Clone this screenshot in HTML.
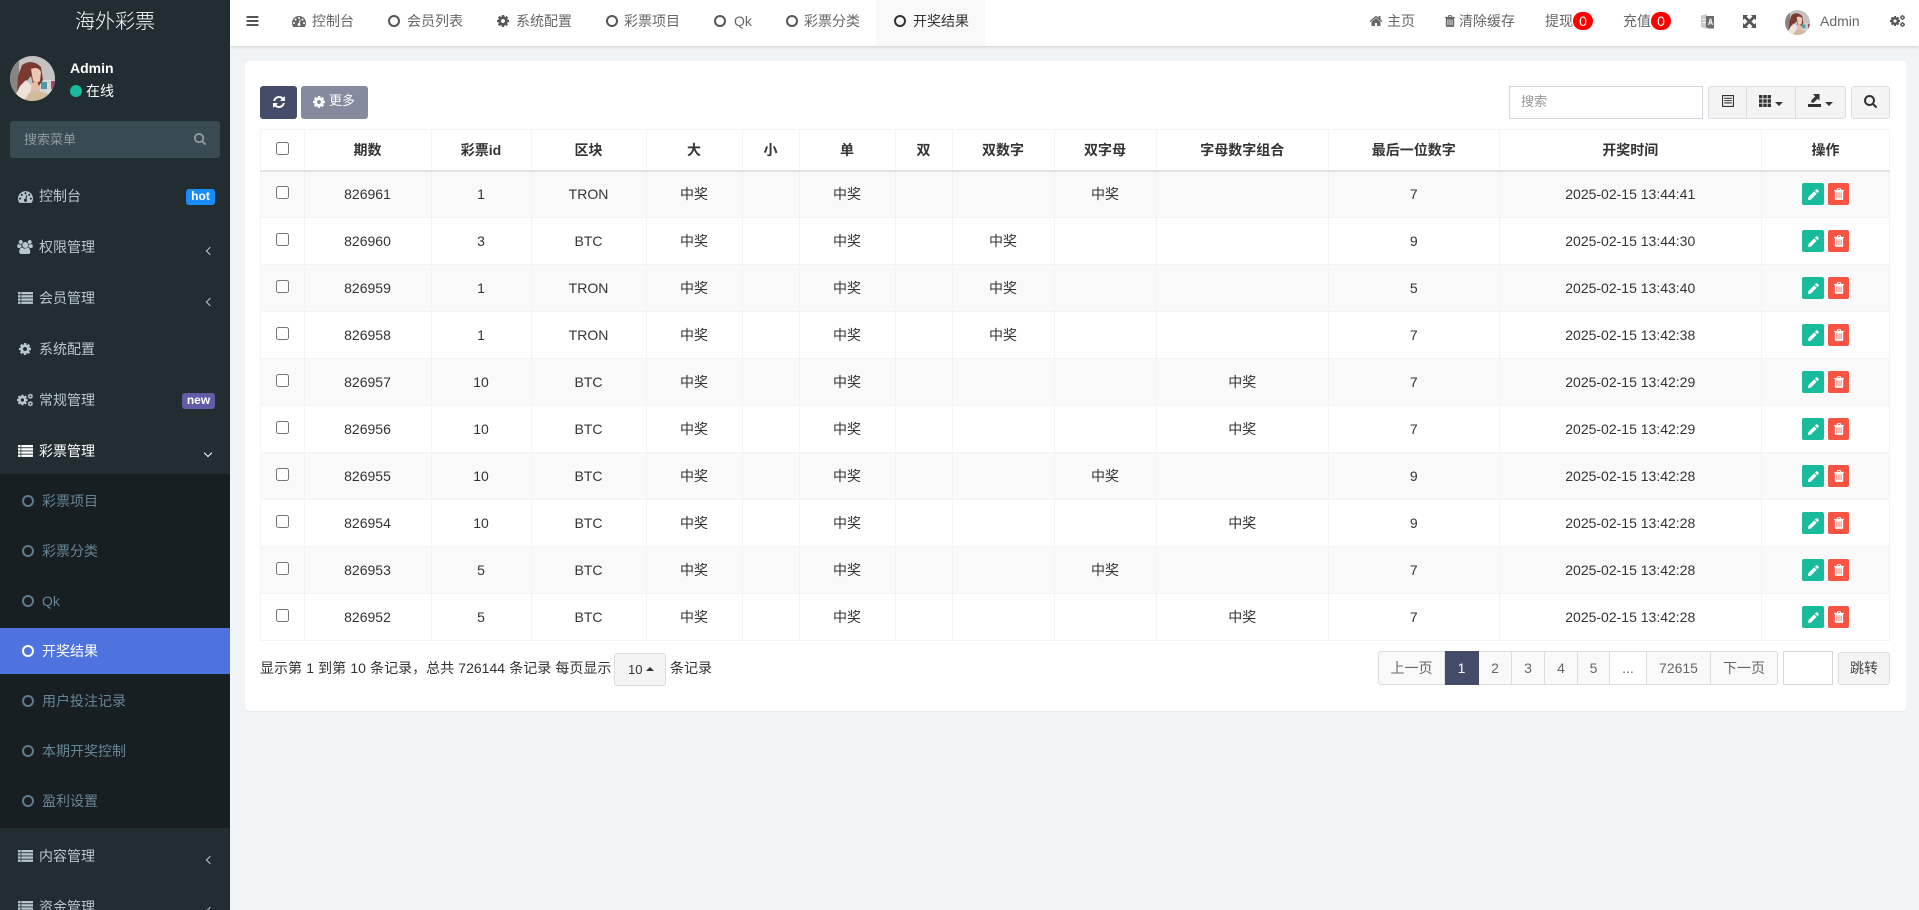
<!DOCTYPE html>
<html lang="zh-CN"><head><meta charset="utf-8"><title>开奖结果</title>
<style>
*{box-sizing:border-box}
html,body{margin:0;padding:0;width:1919px;height:910px;overflow:hidden;background:#f1f4f6;font-family:"Liberation Sans","Noto Sans CJK SC",sans-serif;font-size:14px;color:#333}
.a{position:absolute;white-space:nowrap}
svg.i{position:absolute;fill:currentColor;display:block}
#side{position:absolute;left:0;top:0;width:230px;height:910px;background:#222d32;overflow:hidden}
.m{position:absolute;left:39px;line-height:20px;color:#b8c7ce;white-space:nowrap}
.s{position:absolute;left:42px;line-height:20px;color:#668596;white-space:nowrap}
.r{position:absolute;left:22px;width:12px;height:12px;border:2.5px solid #5c7c8e;border-radius:50%}
.mi{color:#b8c7ce}
.ch{position:absolute;left:206.500px;width:6px;height:6px;border-left:1.5px solid #b8c7ce;border-bottom:1.5px solid #b8c7ce;transform:rotate(45deg)}
#top{position:absolute;left:230px;top:0;width:1689px;height:46px;background:#fff;box-shadow:0 1px 3px rgba(0,0,0,.15)}
.t{position:absolute;top:11px;line-height:20px;color:#666;white-space:nowrap}
.c{position:absolute;top:15px;width:12px;height:12px;border:2.3px solid #555;border-radius:50%}
.bd{position:absolute;top:12px;width:20px;height:18px;background:#f00;color:#fff;border-radius:10px;text-align:center;line-height:18px}
#panel{position:absolute;left:245px;top:61px;width:1661px;height:650px;background:#fff;border-radius:4px;box-shadow:0 1px 1px rgba(0,0,0,.05)}
.b{position:absolute;top:86px;height:33px;border-radius:3px}
table{position:absolute;left:260px;top:129px;width:1630px;table-layout:fixed;border-collapse:collapse}
th,td{border:1px solid #f4f4f4;padding:0;text-align:center;vertical-align:middle;font-size:14px;line-height:20px;overflow:hidden}
th{height:41px;border-bottom:2px solid #e2e3e4;font-weight:bold;color:#333}
td{height:47px;color:#333}
tbody tr:nth-child(odd) td{background:#f9f9f9}
input[type=checkbox]{margin:0;width:13px;height:13px;vertical-align:middle;position:relative;top:-3px;display:inline-block}
.ed,.de{display:inline-block;height:22px;border-radius:2px;vertical-align:middle;position:relative}
.ed{background:#18bc9c;margin-right:4px;width:22px}
.de{background:#f75444;width:21px}
.ed svg{position:absolute;left:5.500px;top:5.500px;width:11px;height:11px;fill:#fff}
.de svg{position:absolute;left:5.500px;top:5px;width:10px;height:12px;fill:#fff}
.pg{position:absolute;top:651px;height:34px;border:1px solid #ddd;border-left:0;background:#f9f9f9;color:#666;text-align:center;line-height:32px}
</style></head><body>
<svg width="0" height="0" style="position:absolute"><defs>
<clipPath id="cv"><circle cx="22.500" cy="22.500" r="22.500"/></clipPath>
<symbol id="ava" viewBox="0 0 45 45"><g clip-path="url(#cv)"><rect width="45" height="45" fill="#c4c2c3"/><rect x="0" width="9" height="45" fill="#8a8582"/><rect x="30" y="24" width="15" height="21" fill="#d9d7d5"/><rect x="31" y="26" width="6" height="7" fill="#4f98a8"/><rect x="41" y="25" width="4" height="8" fill="#a04a5e"/><path d="M12 9Q22 2 31 11L33 24 28 31 23 28 21 20 15 27 14 33 7 35 8 20Z" fill="#7b3a30"/><path d="M21 13Q28 10 31 16L30 25 27 27 23 25Z" fill="#edc9b5"/><path d="M6 38 10 30 16 24 22 30 20 38 13 45H4Z" fill="#efe2db"/><path d="M22 27 27 25 30 33 24 36 21 33Z" fill="#e6bca7"/><path d="M14 45 19 37 28 35 38 38 42 45Z" fill="#d2bb98"/></g></symbol>
<symbol id="bars" viewBox="0 256 1536 1280"><path d="M1536 1344v128q0 26-19 45t-45 19H64q-26 0-45-19t-19-45v-128q0-26 19-45t45-19h1408q26 0 45 19t19 45zm0-512v128q0 26-19 45t-45 19H64q-26 0-45-19T0 960V832q0-26 19-45t45-19h1408q26 0 45 19t19 45zm0-512v128q0 26-19 45t-45 19H64q-26 0-45-19T0 448V320q0-26 19-45t45-19h1408q26 0 45 19t19 45z"/></symbol>
<symbol id="search" viewBox="64 128 1664 1664"><path d="M1216 832q0-185-131.500-316.500T768 384 451.500 515.500 320 832t131.500 316.500T768 1280t316.500-131.500T1216 832zm512 832q0 52-38 90t-90 38q-54 0-90-38l-343-342q-179 124-399 124-143 0-273.500-55.500t-225-150-150-225T64 832t55.500-273.500 150-225 225-150T768 128t273.500 55.500 225 150 150 225T1472 832q0 220-124 399l343 343q37 37 37 90z"/></symbol>
<symbol id="dash" viewBox="0 256 1792 1408"><path d="M384 1152q0-53-37.500-90.500T256 1024t-90.500 37.500T128 1152t37.500 90.500T256 1280t90.500-37.500T384 1152zm192-448q0-53-37.500-90.500T448 576t-90.500 37.500T320 704t37.500 90.500T448 832t90.500-37.500T576 704zm428 481l101-382q6-26-7.500-48.500T1059 725t-48 6.500-30 39.500l-101 382q-60 5-107 43.500t-63 98.500q-20 77 20 146t117 89 146-20 89-117q16-60-6-117t-72-91zm660-33q0-53-37.500-90.500T1536 1024t-90.500 37.500T1408 1152t37.500 90.500 90.500 37.500 90.500-37.500T1664 1152zm-640-640q0-53-37.500-90.500T896 384t-90.500 37.500T768 512t37.500 90.500T896 640t90.500-37.500T1024 512zm448 192q0-53-37.500-90.500T1344 576t-90.500 37.500T1216 704t37.500 90.500T1344 832t90.500-37.500T1472 704zm320 448q0 261-141 483-19 29-54 29H195q-35 0-54-29Q0 1414 0 1152q0-182 71-348t191-286 286-191 348-71 348 71 286 191 191 286 71 348z"/></symbol>
<symbol id="users" viewBox="-64 0 1984 1792"><path d="M529 896q-162 5-265 128H130q-82 0-138-40.500T-64 865q0-353 124-353 6 0 43.500 21t97.500 42.500T320 597q67 0 133-23-5 37-5 66 0 139 81 256zm1071 637q0 120-73 189.500t-194 69.500H459q-121 0-194-69.500T192 1533q0-53 3.500-103.500t14-109T236 1212t43-97.500 62-81 85.500-53.500T538 960q10 0 43 21.500t73 48 107 48 135 21.500 135-21.500 107-48 73-48 43-21.500q61 0 111.500 20t85.500 53.500 62 81 43 97.500 26.500 108.500 14 109 3.500 103.500zM640 256q0 106-75 181t-181 75-181-75-75-181 75-181 181-75 181 75 75 181zm704 384q0 159-112.500 271.500T960 1024 688.500 911.500 576 640t112.500-271.500T960 256t271.500 112.500T1344 640zm576 225q0 78-56 118.500t-138 40.500h-134q-103-123-265-128 81-117 81-256 0-29-5-66 66 23 133 23 59 0 119-21.500t97.500-42.500 43.500-21q124 0 124 353zm-128-609q0 106-75 181t-181 75-181-75-75-181 75-181 181-75 181 75 75 181z"/></symbol>
<symbol id="gear" viewBox="0 128 1536 1536"><path d="M1024 896q0-106-75-181t-181-75-181 75-75 181 75 181 181 75 181-75 75-181zm512-109v222q0 12-8 23t-20 13l-185 28q-19 54-39 91 35 50 107 138 10 12 10 25t-9 23q-27 37-99 108t-94 71q-12 0-26-9l-138-108q-44 23-91 38-16 136-29 186-7 28-36 28H657q-14 0-24.500-8.500T621 1636l-28-184q-49-16-90-37l-141 107q-10 9-25 9-14 0-25-11-126-114-165-168-7-10-7-23 0-12 8-23 15-21 51-66.500t54-70.500q-27-50-41-99l-183-27q-13-2-21-12.500t-8-23.500V783q0-12 8-23t19-13l186-28q14-46 39-92-40-57-107-138-10-12-10-24 0-10 9-23 26-36 98.500-107.500T353 263q13 0 26 10l138 107q44-23 91-38 16-136 29-186 7-28 36-28h222q14 0 24.500 8.500T931 158l28 184q49 16 90 37l142-107q9-9 24-9 13 0 25 10 129 119 165 170 7 8 7 22 0 12-8 23-15 21-51 66.500t-54 70.500q26 50 41 98l183 28q13 2 21 12.500t8 23.500z"/></symbol>
<symbol id="cogs" viewBox="0 0 30 24"><use href="#gear" x="0" y="2" width="20" height="20"/><use href="#gear" x="20" y="0" width="10" height="10"/><use href="#gear" x="20" y="14" width="10" height="10"/></symbol>
<symbol id="list" viewBox="0 0 15 12"><rect x="0" y="0" width="2.600" height="2.300"/><rect x="3.300" y="0" width="11.700" height="2.300"/><rect x="0" y="3.200" width="2.600" height="2.300"/><rect x="3.300" y="3.200" width="11.700" height="2.300"/><rect x="0" y="6.400" width="2.600" height="2.300"/><rect x="3.300" y="6.400" width="11.700" height="2.300"/><rect x="0" y="9.600" width="2.600" height="2.300"/><rect x="3.300" y="9.600" width="11.700" height="2.300"/></symbol>
<symbol id="refresh" viewBox="0 128 1536 1536"><path d="M1511 1056q0 5-1 7-64 268-268 434.500T764 1664q-146 0-282.500-55T238 1452l-129 129q-19 19-45 19t-45-19-19-45v-448q0-26 19-45t45-19h448q26 0 45 19t19 45-19 45l-137 137q71 66 161 102t187 36q134 0 250-65t186-179q11-17 53-117 8-23 30-23h192q13 0 22.500 9.500t9.500 22.500zm25-800v448q0 26-19 45t-45 19h-448q-26 0-45-19t-19-45 19-45l138-138Q969 384 768 384q-134 0-250 65T332 628q-11 17-53 117-8 23-30 23H50q-13 0-22.500-9.500T18 736v-7q65-268 270-434.500T768 128q146 0 284 55.500T1297 340l130-129q19-19 45-19t45 19 19 45z"/></symbol>
<symbol id="home" viewBox="0 128 1792 1408"><path d="M1472 992v480q0 26-19 45t-45 19h-384v-384H768v384H384q-26 0-45-19t-19-45V992q0-1 .5-3t.5-3l575-474 575 474q1 2 1 6zm223-69l-62 74q-8 9-21 11h-3q-13 0-21-7L896 424l-692 577q-12 8-24 7-13-2-21-11l-62-74q-8-10-7-23.500t11-21.500l719-599q32-26 76-26t76 26l244 204V288q0-14 9-23t23-9h192q14 0 23 9t9 23v408l219 182q10 8 11 21.500t-7 23.500z"/></symbol>
<symbol id="trash" viewBox="0 0 12 14"><path fill-rule="evenodd" d="M4.200 0h3.600l.8 2H12v1.300h-1V13a1 1 0 0 1-1 1H2a1 1 0 0 1-1-1V3.300H0V2h3.400zM5 1 4.700 2h2.600L7 1zM3 5v7h1V5zm2.500 0v7h1V5zM8 5v7h1V5z"/></symbol>
<symbol id="pencil" viewBox="0 0 14 14"><path d="M10.300.6a1.200 1.200 0 0 1 1.700 0l1.400 1.400a1.200 1.200 0 0 1 0 1.700l-1.500 1.500-3.100-3.100zM7.900 3 11 6.100 3.600 13.500 0 14l.5-3.600z"/></symbol>
<symbol id="expand" viewBox="0 0 14 14"><path d="M0 0h5.500L3.800 1.700 7 4.900 10.200 1.700 8.500 0H14v5.500L12.300 3.800 9.100 7l3.200 3.200L14 8.500V14H8.500l1.700-1.700L7 9.100 3.800 12.300 5.500 14H0V8.500l1.700 1.700L4.900 7 1.700 3.800 0 5.500z"/></symbol>
<symbol id="lang" viewBox="0 0 13 15"><path fill="#c9c9c9" d="M0 1.500 6 0v15L0 13z"/><path fill="#fff" d="M1.500 5h3v1h-3zM1.500 8h3v1h-3z"/><path fill="#6c6c6c" d="M5 2h8v12.500H7.500L5 13z"/><path fill="#fff" d="M8.900 4.500h1.200l1.900 6.500h-1.200l-.4-1.500H8.600L8.200 11H7zm.6 1.600-.6 2.400h1.200z"/></symbol>
<symbol id="listalt" viewBox="0 0 13 13"><path fill-rule="evenodd" d="M0 0h13v13H0zm1.200 1.200v10.600h10.600V1.200zM2.500 3h8v1.200h-8zm0 2.500h8v1.200h-8zm0 2.500h8v1.200h-8z"/></symbol>
<symbol id="th" viewBox="0 0 13 13"><path d="M0 0h3.700v3.700H0zM4.650 0h3.700v3.700h-3.700zM9.300 0H13v3.700H9.300zM0 4.650h3.700v3.700H0zM4.650 4.650h3.700v3.700h-3.700zM9.300 4.650H13v3.700H9.300zM0 9.300h3.700V13H0zM4.650 9.300h3.700V13h-3.700zM9.300 9.300H13V13H9.300z"/></symbol>
<symbol id="export" viewBox="0 0 13 13"><path d="M0 10h13v3H0zM5 0h6.500v6.500L9.600 4.700 5.700 8.600H3.300V6.400l3.900-3.900z"/></symbol>
</defs></svg>

<div id="side">
<div class="a" style="left:0;width:230px;top:8px;text-align:center;color:#fff;font-size:20px;line-height:28px;font-weight:300">海外彩票</div>
<svg style="position:absolute;left:10px;top:56px" width="45" height="45"><use href="#ava"/></svg>
<div class="a" style="left:70px;top:58px;color:#fff;font-weight:bold;line-height:20px">Admin</div>
<div class="a" style="left:70px;top:85px;width:12px;height:12px;border-radius:50%;background:#18bc9c"></div>
<div class="a" style="left:86px;top:81px;color:#fff;line-height:20px">在线</div>
<div class="a" style="left:10px;top:121px;width:210px;height:37px;background:#3a4a52;border-radius:3px"></div>
<div class="a" style="left:24px;top:130px;color:#8f9ba0;font-size:13px;line-height:20px">搜索菜单</div>
<svg class="i" style="left:194px;top:133px;width:12px;height:12px;color:#8f9ba0"><use href="#search"/></svg>

<svg class="i mi" style="left:18px;top:191px;width:15px;height:12px"><use href="#dash"/></svg><div class="m" style="top:186px">控制台</div>
<div class="a" style="left:186px;top:189px;width:29px;height:16px;background:#1a8cf7;border-radius:3px;color:#fff;font-weight:bold;font-size:12px;line-height:15px;text-align:center">hot</div>
<svg class="i mi" style="left:17px;top:240px;width:16px;height:14px"><use href="#users"/></svg><div class="m" style="top:237px">权限管理</div><div class="ch" style="top:248px"></div>
<svg class="i mi" style="left:18px;top:292px;width:15px;height:12px"><use href="#list"/></svg><div class="m" style="top:288px">会员管理</div><div class="ch" style="top:299px"></div>
<svg class="i mi" style="left:19px;top:343px;width:12px;height:12px"><use href="#gear"/></svg><div class="m" style="top:339px">系统配置</div>
<svg class="i mi" style="left:17px;top:393px;width:16px;height:14px"><use href="#cogs"/></svg><div class="m" style="top:390px">常规管理</div>
<div class="a" style="left:182px;top:393px;width:33px;height:16px;background:#605ca8;border-radius:3px;color:#fff;font-weight:bold;font-size:12px;line-height:15px;text-align:center">new</div>
<svg class="i" style="left:18px;top:445px;width:15px;height:12px;color:#fff"><use href="#list"/></svg><div class="m" style="top:441px;color:#fff">彩票管理</div><div class="ch" style="left:205px;top:450px;border-color:#fff;transform:rotate(-45deg)"></div>

<div class="a" style="left:0;top:474px;width:230px;height:354px;background:#181f23"></div>
<div class="r" style="top:495px"></div><div class="s" style="top:491px">彩票项目</div>
<div class="r" style="top:545px"></div><div class="s" style="top:541px">彩票分类</div>
<div class="r" style="top:595px"></div><div class="s" style="top:591px">Qk</div>
<div class="a" style="left:0;top:628px;width:230px;height:46px;background:#4e73df"></div>
<div class="r" style="top:645px;border-color:#fff"></div><div class="s" style="top:641px;color:#fff">开奖结果</div>
<div class="r" style="top:695px"></div><div class="s" style="top:691px">用户投注记录</div>
<div class="r" style="top:745px"></div><div class="s" style="top:741px">本期开奖控制</div>
<div class="r" style="top:795px"></div><div class="s" style="top:791px">盈利设置</div>
<svg class="i mi" style="left:18px;top:850px;width:15px;height:12px"><use href="#list"/></svg><div class="m" style="top:846px">内容管理</div><div class="ch" style="top:857px"></div>
<svg class="i mi" style="left:18px;top:901px;width:15px;height:12px"><use href="#list"/></svg><div class="m" style="top:897px">资金管理</div><div class="ch" style="top:908px"></div>
</div>

<div id="top"></div>
<svg class="i" style="left:246px;top:16px;width:13px;height:10px;color:#555"><use href="#bars"/></svg>
<svg class="i" style="left:292px;top:16px;width:14px;height:11px;color:#666"><use href="#dash"/></svg><div class="t" style="left:312px">控制台</div>
<div class="c" style="left:388px"></div><div class="t" style="left:407px">会员列表</div>
<svg class="i" style="left:497px;top:15px;width:12px;height:12px;color:#555"><use href="#gear"/></svg><div class="t" style="left:516px">系统配置</div>
<div class="c" style="left:606px"></div><div class="t" style="left:624px">彩票项目</div>
<div class="c" style="left:714px"></div><div class="t" style="left:734px">Qk</div>
<div class="c" style="left:786px"></div><div class="t" style="left:804px">彩票分类</div>
<div class="a" style="left:876px;top:0;width:109px;height:46px;background:#f9f9f9"></div>
<div class="c" style="left:894px;border-color:#333"></div><div class="t" style="left:913px;color:#333">开奖结果</div>

<svg class="i" style="left:1369px;top:15px;width:14px;height:11px;color:#666"><use href="#home"/></svg><div class="t" style="left:1387px">主页</div>
<svg class="i" style="left:1445px;top:15px;width:10px;height:12px;color:#666"><use href="#trash"/></svg><div class="t" style="left:1459px">清除缓存</div>
<div class="t" style="left:1545px">提现</div><div class="bd" style="left:1573px">0</div>
<div class="t" style="left:1623px">充值</div><div class="bd" style="left:1651px">0</div>
<svg class="i" style="left:1701px;top:14px;width:13px;height:15px"><use href="#lang"/></svg>
<svg class="i" style="left:1743px;top:15px;width:13px;height:13px;color:#555"><use href="#expand"/></svg>
<svg style="position:absolute;left:1785px;top:10px" width="25" height="25"><use href="#ava"/></svg>
<div class="t" style="left:1820px">Admin</div>
<svg class="i" style="left:1890px;top:15px;width:15px;height:12px;color:#555"><use href="#cogs"/></svg>

<div id="panel"></div>
<div class="b" style="left:260px;width:37px;background:#444c69"></div>
<svg class="i" style="left:273px;top:96px;width:12px;height:12px;color:#fff"><use href="#refresh"/></svg>
<div class="b" style="left:301px;width:67px;background:#858a9f"></div>
<svg class="i" style="left:313px;top:96px;width:12px;height:12px;color:#fff"><use href="#gear"/></svg>
<div class="a" style="left:329px;top:91px;color:#fff;font-size:13px;line-height:20px">更多</div>

<div class="a" style="left:1509px;top:86px;width:194px;height:33px;border:1px solid #d2d6de;background:#fff"></div>
<div class="a" style="left:1521px;top:92px;color:#999;font-size:13px;line-height:20px">搜索</div>
<div class="b" style="left:1708px;width:138px;background:#f4f4f4;border:1px solid #ddd"></div>
<div class="a" style="left:1746px;top:86px;width:1px;height:33px;background:#ddd"></div>
<div class="a" style="left:1795px;top:86px;width:1px;height:33px;background:#ddd"></div>
<svg class="i" style="left:1722px;top:95px;width:12px;height:12px;color:#333"><use href="#listalt"/></svg>
<svg class="i" style="left:1759px;top:95px;width:12px;height:12px;color:#333"><use href="#th"/></svg>
<div class="a" style="left:1775px;top:102px;border:4px solid transparent;border-top:4px solid #333;border-bottom:0"></div>
<svg class="i" style="left:1808px;top:94px;width:13px;height:13px;color:#333"><use href="#export"/></svg>
<div class="a" style="left:1825px;top:102px;border:4px solid transparent;border-top:4px solid #333;border-bottom:0"></div>
<div class="b" style="left:1851px;width:39px;background:#f4f4f4;border:1px solid #ddd"></div>
<svg class="i" style="left:1864px;top:95px;width:13px;height:13px;color:#333"><use href="#search"/></svg>

<table style="width:1629px">
<colgroup><col style="width:43.500px"><col style="width:127px"><col style="width:100px"><col style="width:115px"><col style="width:96px"><col style="width:57px"><col style="width:96px"><col style="width:57px"><col style="width:102px"><col style="width:102px"><col style="width:172.500px"><col style="width:170.500px"><col style="width:262.500px"><col style="width:128px"></colgroup>
<thead><tr><th><input type="checkbox"></th><th>期数</th><th>彩票id</th><th>区块</th><th>大</th><th>小</th><th>单</th><th>双</th><th>双数字</th><th>双字母</th><th>字母数字组合</th><th>最后一位数字</th><th>开奖时间</th><th>操作</th></tr></thead>
<tbody>
<tr><td><input type="checkbox"></td><td>826961</td><td>1</td><td>TRON</td><td>中奖</td><td></td><td>中奖</td><td></td><td></td><td>中奖</td><td></td><td>7</td><td>2025-02-15 13:44:41</td><td><span class="ed"><svg><use href="#pencil"/></svg></span><span class="de"><svg><use href="#trash"/></svg></span></td></tr>
<tr><td><input type="checkbox"></td><td>826960</td><td>3</td><td>BTC</td><td>中奖</td><td></td><td>中奖</td><td></td><td>中奖</td><td></td><td></td><td>9</td><td>2025-02-15 13:44:30</td><td><span class="ed"><svg><use href="#pencil"/></svg></span><span class="de"><svg><use href="#trash"/></svg></span></td></tr>
<tr><td><input type="checkbox"></td><td>826959</td><td>1</td><td>TRON</td><td>中奖</td><td></td><td>中奖</td><td></td><td>中奖</td><td></td><td></td><td>5</td><td>2025-02-15 13:43:40</td><td><span class="ed"><svg><use href="#pencil"/></svg></span><span class="de"><svg><use href="#trash"/></svg></span></td></tr>
<tr><td><input type="checkbox"></td><td>826958</td><td>1</td><td>TRON</td><td>中奖</td><td></td><td>中奖</td><td></td><td>中奖</td><td></td><td></td><td>7</td><td>2025-02-15 13:42:38</td><td><span class="ed"><svg><use href="#pencil"/></svg></span><span class="de"><svg><use href="#trash"/></svg></span></td></tr>
<tr><td><input type="checkbox"></td><td>826957</td><td>10</td><td>BTC</td><td>中奖</td><td></td><td>中奖</td><td></td><td></td><td></td><td>中奖</td><td>7</td><td>2025-02-15 13:42:29</td><td><span class="ed"><svg><use href="#pencil"/></svg></span><span class="de"><svg><use href="#trash"/></svg></span></td></tr>
<tr><td><input type="checkbox"></td><td>826956</td><td>10</td><td>BTC</td><td>中奖</td><td></td><td>中奖</td><td></td><td></td><td></td><td>中奖</td><td>7</td><td>2025-02-15 13:42:29</td><td><span class="ed"><svg><use href="#pencil"/></svg></span><span class="de"><svg><use href="#trash"/></svg></span></td></tr>
<tr><td><input type="checkbox"></td><td>826955</td><td>10</td><td>BTC</td><td>中奖</td><td></td><td>中奖</td><td></td><td></td><td>中奖</td><td></td><td>9</td><td>2025-02-15 13:42:28</td><td><span class="ed"><svg><use href="#pencil"/></svg></span><span class="de"><svg><use href="#trash"/></svg></span></td></tr>
<tr><td><input type="checkbox"></td><td>826954</td><td>10</td><td>BTC</td><td>中奖</td><td></td><td>中奖</td><td></td><td></td><td></td><td>中奖</td><td>9</td><td>2025-02-15 13:42:28</td><td><span class="ed"><svg><use href="#pencil"/></svg></span><span class="de"><svg><use href="#trash"/></svg></span></td></tr>
<tr><td><input type="checkbox"></td><td>826953</td><td>5</td><td>BTC</td><td>中奖</td><td></td><td>中奖</td><td></td><td></td><td>中奖</td><td></td><td>7</td><td>2025-02-15 13:42:28</td><td><span class="ed"><svg><use href="#pencil"/></svg></span><span class="de"><svg><use href="#trash"/></svg></span></td></tr>
<tr><td><input type="checkbox"></td><td>826952</td><td>5</td><td>BTC</td><td>中奖</td><td></td><td>中奖</td><td></td><td></td><td></td><td>中奖</td><td>7</td><td>2025-02-15 13:42:28</td><td><span class="ed"><svg><use href="#pencil"/></svg></span><span class="de"><svg><use href="#trash"/></svg></span></td></tr>
</tbody></table>

<div class="a" style="left:260px;top:658px;line-height:20px;word-spacing:.3px">显示第 1 到第 10 条记录，总共 726144 条记录 每页显示</div>
<div class="a" style="left:614px;top:653px;width:52px;height:33px;background:#f4f4f4;border:1px solid #ddd;border-radius:3px;line-height:31px;padding-left:13px;font-size:13px">10</div>
<div class="a" style="left:646px;top:667px;border:4px solid transparent;border-bottom:4px solid #333;border-top:0"></div>
<div class="a" style="left:670px;top:658px;line-height:20px">条记录</div>

<div class="pg" style="left:1378px;width:67px;border-left:1px solid #ddd;border-radius:3px 0 0 3px">上一页</div>
<div class="pg" style="left:1445px;width:34px;background:#444c69;border-color:#444c69;color:#fff">1</div>
<div class="pg" style="left:1479px;width:33px">2</div>
<div class="pg" style="left:1512px;width:33px">3</div>
<div class="pg" style="left:1545px;width:33px">4</div>
<div class="pg" style="left:1578px;width:32px">5</div>
<div class="pg" style="left:1610px;width:37px;background:#fff">...</div>
<div class="pg" style="left:1647px;width:64px">72615</div>
<div class="pg" style="left:1711px;width:67px;border-radius:0 3px 3px 0">下一页</div>
<div class="a" style="left:1783px;top:651px;width:50px;height:34px;border:1px solid #d2d6de;background:#fff"></div>
<div class="a" style="left:1838px;top:652px;width:52px;height:33px;background:#f4f4f4;border:1px solid #ddd;border-radius:3px;color:#444;text-align:center;line-height:31px">跳转</div>
</body></html>
